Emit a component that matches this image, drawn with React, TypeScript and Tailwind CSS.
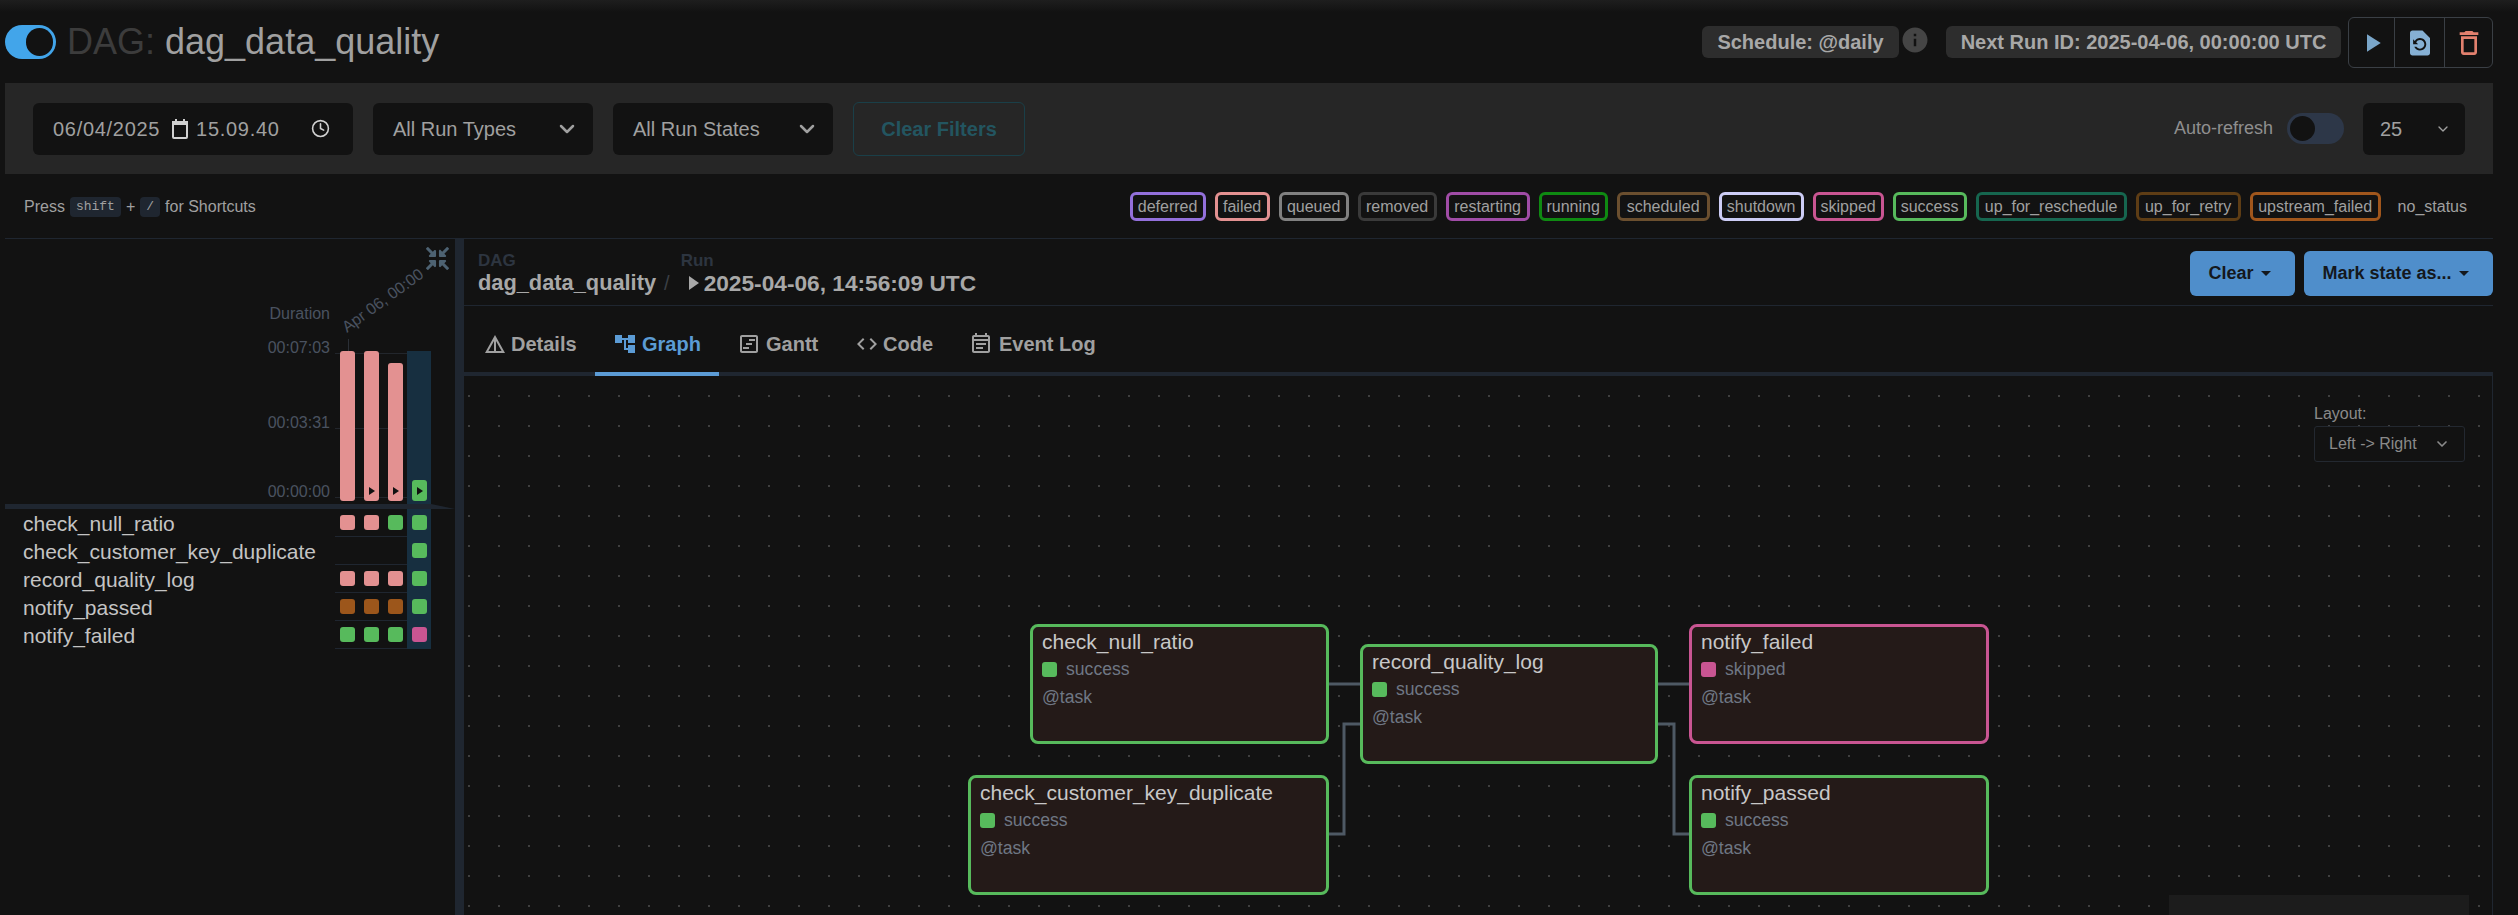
import { ChevronDown, Clock } from 'lucide-react';
import { FaCompressArrowsAlt } from 'react-icons/fa';
import {
  MdAccountTree,
  MdCode,
  MdDetails,
  MdInfo,
  MdOutlineDelete,
  MdOutlineEventNote,
  MdOutlineViewTimeline,
  MdPlayArrow,
  MdRestorePage,
} from 'react-icons/md';

const legend = [
  { name: 'deferred', className: 'w-[76px] border-[#9370db]' },
  { name: 'failed', className: 'w-[55px] border-[#e39191]' },
  { name: 'queued', className: 'w-[70px] border-[#808080]' },
  { name: 'removed', className: 'w-[79px] border-[#3a3a3a]' },
  { name: 'restarting', className: 'w-[84px] border-[#a04ca6]' },
  { name: 'running', className: 'w-[69px] border-[#0f8a12]' },
  { name: 'scheduled', className: 'w-[93px] border-[#6b4f2f]' },
  { name: 'shutdown', className: 'w-[85px] border-[#ccccf5]' },
  { name: 'skipped', className: 'w-[71px] border-[#c95592]' },
  { name: 'success', className: 'w-[74px] border-[#57ba5c]' },
  { name: 'up_for_reschedule', className: 'w-[151px] border-[#16664f]' },
  { name: 'up_for_retry', className: 'w-[105px] border-[#5e3d15]' },
  { name: 'upstream_failed', className: 'w-[131px] border-[#a0561c]' },
];

const RED = 'bg-[#e39191]';
const GREEN = 'bg-[#57ba5c]';
const BROWN = 'bg-[#9c561b]';
const PINK = 'bg-[#c95592]';

const rows = [
  { name: 'check_null_ratio', cells: [RED, RED, GREEN, GREEN] },
  { name: 'check_customer_key_duplicate', cells: ['', '', '', GREEN] },
  { name: 'record_quality_log', cells: [RED, RED, RED, GREEN] },
  { name: 'notify_passed', cells: [BROWN, BROWN, BROWN, GREEN] },
  { name: 'notify_failed', cells: [GREEN, GREEN, GREEN, PINK] },
];

const nodes = [
  { name: 'check_null_ratio', status: 'success', place: 'left-[566px] top-[248px] w-[299px] border-[#57ba5c]', dot: GREEN },
  { name: 'check_customer_key_duplicate', status: 'success', place: 'left-[504px] top-[399px] w-[361px] border-[#57ba5c]', dot: GREEN },
  { name: 'record_quality_log', status: 'success', place: 'left-[896px] top-[268px] w-[298px] border-[#57ba5c]', dot: GREEN },
  { name: 'notify_failed', status: 'skipped', place: 'left-[1225px] top-[248px] w-[300px] border-[#c95592]', dot: PINK },
  { name: 'notify_passed', status: 'success', place: 'left-[1225px] top-[399px] w-[300px] border-[#57ba5c]', dot: GREEN },
];

function Select({ label, className }: { label: string; className: string }) {
  return (
    <div className={`flex h-[52px] items-center justify-between rounded-md bg-[#121212] pl-[20px] pr-[14px] text-[20px] text-[#a0a0a0] ${className}`}>
      <span>{label}</span>
      <ChevronDown size={24} strokeWidth={2.5} />
    </div>
  );
}

function Header() {
  return (
    <div className="flex h-[83px] items-start justify-between pb-[16px]">
      <div className="flex h-full items-center gap-[11px] pt-[16px]">
        <div className="flex h-[34px] w-[51px] items-center justify-end rounded-full bg-[#42a5ea] pr-[3px]">
          <div className="h-[28px] w-[27px] rounded-full bg-[#121212]" />
        </div>
        <h1 className="text-[36px] leading-[44px] text-[#a0a0a0]">
          <span className="text-[#3c3c3c]">DAG: </span>dag_data_quality
        </h1>
      </div>
      <div className="flex items-start pt-[17px]">
        <div className="mt-[9px] flex h-[32px] w-[197px] items-center justify-center rounded-md bg-[#2d2d2d] text-[20px] font-bold text-[#a8a8a8]">
          Schedule: @daily
        </div>
        <MdInfo size={30} className="ml-[1px] mt-[8px] text-[#454545]" />
        <div className="ml-[16px] mt-[9px] flex h-[32px] w-[395px] items-center justify-center rounded-md bg-[#2d2d2d] text-[20px] font-bold text-[#a8a8a8]">
          Next Run ID: 2025-04-06, 00:00:00 UTC
        </div>
        <div className="ml-[7px] flex h-[51px] w-[145px] rounded-md border border-[#3a3f45]">
          <div className="flex w-[46px] items-center justify-center border-r border-[#3a3f45]">
            <MdPlayArrow size={30} className="text-[#7aa6c9]" />
          </div>
          <div className="flex w-[50px] items-center justify-center border-r border-[#3a3f45]">
            <MdRestorePage size={30} className="text-[#86b0d4]" />
          </div>
          <div className="flex flex-1 items-center justify-center">
            <MdOutlineDelete size={32} className="text-[#e2806e]" />
          </div>
        </div>
      </div>
    </div>
  );
}

function Filters() {
  return (
    <div className="flex h-[91px] items-center justify-between bg-[#262626] pl-[28px] pr-[28px]">
      <div className="flex items-center gap-[20px]">
        <div className="flex h-[52px] w-[320px] items-center rounded-md bg-[#121212] pl-[20px] text-[20px] tracking-[0.7px] text-[#a0a0a0]">
          <span>06/04/2025</span>
          <svg width="18" height="22" viewBox="0 0 18 22" className="ml-[11px] mr-[7px]" fill="none" stroke="#d0d0d0" strokeWidth="2">
            <rect x="2" y="4" width="14" height="16" rx="1" />
            <path d="M2 6h14V4H2zM5 1v3M13 1v3" fill="#d0d0d0" />
          </svg>
          <span>15.09.40</span>
          <Clock size={19} className="ml-[31px] text-[#d0d0d0]" />
        </div>
        <Select label="All Run Types" className="w-[220px]" />
        <Select label="All Run States" className="w-[220px]" />
        <button className="h-[54px] w-[172px] rounded-md border border-[#1a3f48] text-[20px] font-bold text-[#235560]">
          Clear Filters
        </button>
      </div>
      <div className="flex items-center">
        <span className="text-[18px] text-[#8f8f8f]">Auto-refresh</span>
        <div className="ml-[14px] flex h-[31px] w-[57px] items-center rounded-full bg-[#2d3748] pl-[3px]">
          <div className="h-[25px] w-[25px] rounded-full bg-[#121212]" />
        </div>
        <div className="ml-[19px] flex h-[52px] w-[102px] items-center justify-between rounded-md bg-[#121212] pl-[17px] pr-[14px] text-[20px] text-[#a0a0a0]">
          <span>25</span>
          <ChevronDown size={16} />
        </div>
      </div>
    </div>
  );
}

function LegendRow() {
  return (
    <div className="flex h-[65px] items-start justify-between border-b border-[#1f2630] pl-[19px] pr-[26px] pt-[18px] text-[16px] text-[#a0a0a0]">
      <div className="flex h-[29px] items-center gap-[5px]">
        <span>Press</span>
        <kbd className="flex h-[20px] items-center rounded-[4px] bg-[#1f2630] px-[6px] font-['Liberation_Mono',monospace] text-[13px]">shift</kbd>
        <span>+</span>
        <kbd className="flex h-[20px] items-center rounded-[4px] bg-[#1f2630] px-[6px] font-['Liberation_Mono',monospace] text-[13px]">/</kbd>
        <span>for Shortcuts</span>
      </div>
      <div className="flex items-center gap-[9px]">
        {legend.map((item) => (
          <span key={item.name} className={`flex h-[29px] items-center justify-center whitespace-nowrap rounded-[6px] border-[3px] ${item.className}`}>
            {item.name}
          </span>
        ))}
        <span className="ml-[8px]">no_status</span>
      </div>
    </div>
  );
}

function RunBar({ height, color, running }: { height: string; color: string; running?: boolean }) {
  return (
    <div className={`flex w-[15px] items-end justify-center rounded-[3px] pb-[6px] ${height} ${color}`}>
      {running && <div className="h-0 w-0 border-y-[4px] border-l-[6px] border-y-transparent border-l-[#111]" />}
    </div>
  );
}

function GridPanel() {
  return (
    <div className="flex w-[450px] shrink-0 flex-col">
      <div className="relative h-[112px]">
        <FaCompressArrowsAlt size={23} className="absolute left-[421px] top-[8px] text-[#4d6272]" />
        <span className="absolute right-[125px] top-[63px] text-[16px] text-[#4a5260]">Duration</span>
        <span className="absolute left-[339px] top-[78px] origin-left -rotate-[36deg] whitespace-nowrap text-[16px] text-[#4a5260]">Apr 06, 00:00</span>
        <div className="absolute bottom-0 left-[343px] h-[12px] w-px bg-[#2a2f36]" />
      </div>
      <div className="relative flex h-[153px] justify-end pr-[24px]">
        <div className="absolute left-[330px] right-[24px] top-[2px] h-px bg-[#22262c]" />
        <div className="absolute left-[330px] right-[24px] top-[77px] h-px bg-[#22262c]" />
        <div className="absolute left-[330px] right-[24px] top-[146px] h-px bg-[#22262c]" />
        <div className="relative -mt-[15px] mr-[5px] flex flex-col text-right text-[16px] leading-[24px] text-[#4a5260]">
          <span>00:07:03</span>
          <span className="mt-[51px]">00:03:31</span>
          <span className="mt-[45px]">00:00:00</span>
        </div>
        <div className="relative flex h-[150px] w-[24px] items-end pl-[5px]">
          <RunBar height="h-[150px]" color={RED} />
        </div>
        <div className="relative flex h-[150px] w-[24px] items-end pl-[5px]">
          <RunBar height="h-[150px]" color={RED} running />
        </div>
        <div className="relative flex h-[150px] w-[24px] items-end pl-[5px]">
          <RunBar height="h-[138px]" color={RED} running />
        </div>
        <div className="relative flex h-[153px] w-[24px] items-end bg-[#172f40] pb-[3px] pl-[5px]">
          <RunBar height="h-[21px]" color={GREEN} running />
        </div>
      </div>
      <div className="flex h-[5px]">
        <div className="h-full w-[426px] bg-[#1f2630]" />
        <div className="h-0 w-0 border-l-[24px] border-t-[5px] border-l-[#1f2630] border-t-transparent" />
      </div>
      <div className="pr-[24px]">
        {rows.map((row) => (
          <div key={row.name} className="flex h-[28px]">
            <span className="flex-1 pl-[18px] text-[21px] leading-[30px] text-[#c4c4c4]">{row.name}</span>
            {row.cells.map((cell, i) => (
              <div
                key={i}
                className={`h-full w-[24px] pl-[5px] pt-[6px] ${i === 3 ? 'bg-[#172f40]' : 'border-b border-[#1f2630]'}`}
              >
                {cell && <div className={`h-[15px] w-[15px] rounded-[3px] ${cell}`} />}
              </div>
            ))}
          </div>
        ))}
      </div>
    </div>
  );
}

function TaskNode({ node }: { node: (typeof nodes)[number] }) {
  return (
    <div className={`absolute h-[120px] rounded-[8px] border-[3px] bg-[#241a18] pl-[9px] pt-[3px] ${node.place}`}>
      <div className="text-[21px] leading-[24px] text-[#c8c8c8]">{node.name}</div>
      <div className="mt-[8px] flex h-[15px] items-center gap-[9px]">
        <div className={`h-[15px] w-[15px] rounded-[3px] ${node.dot}`} />
        <span className="text-[17.6px] leading-[15px] text-[#6f7784]">{node.status}</span>
      </div>
      <div className="mt-[7px] text-[17.6px] leading-[26px] text-[#6f7784]">@task</div>
    </div>
  );
}

function DetailsPanel() {
  return (
    <div className="flex min-w-0 flex-1 flex-col">
      <div className="flex h-[67px] shrink-0 items-start justify-between border-b border-[#1f2630] pl-[14px] pt-[12px]">
        <div className="flex">
          <div>
            <div className="text-[17px] font-bold leading-[20px] text-[#2d3540]">DAG</div>
            <div className="-mt-[1px] text-[21.8px] font-bold leading-[26px] text-[#a8a8a8]">dag_data_quality</div>
          </div>
          <span className="ml-[8px] mt-[19px] text-[20px] leading-[26px] text-[#3a3f45]">/</span>
          <div className="ml-[11px]">
            <div className="text-[17px] font-bold leading-[20px] text-[#2d3540]">Run</div>
            <div className="-mt-[1px] flex items-center text-[22.7px] font-bold leading-[26px] text-[#a8a8a8]">
              <span className="ml-[8px] mr-[5px] h-0 w-0 border-y-[7px] border-l-[10px] border-y-transparent border-l-[#a8a8a8]" />
              2025-04-06, 14:56:09 UTC
            </div>
          </div>
        </div>
        <div className="flex gap-[9px]">
          <button className="flex h-[45px] w-[105px] items-center justify-center gap-[7px] rounded-md bg-[#4f8ecb] pr-[6px] text-[18px] font-bold text-[#14181d]">
            Clear
            <span className="h-0 w-0 border-x-[5px] border-t-[5px] border-x-transparent border-t-[#14181d]" />
          </button>
          <button className="flex h-[45px] w-[189px] items-center justify-center gap-[7px] rounded-md bg-[#4f8ecb] pr-[6px] text-[18px] font-bold text-[#14181d]">
            Mark state as...
            <span className="h-0 w-0 border-x-[5px] border-t-[5px] border-x-transparent border-t-[#14181d]" />
          </button>
        </div>
      </div>
      <div className="flex h-[70px] shrink-0 items-stretch border-b-[4px] border-[#1f2630] pl-[1px] pt-[10px] text-[20px] font-bold text-[#a0a0a0]">
        <div className="flex w-[130px] items-center gap-[4px] pl-[18px]">
          <MdDetails size={24} />
          Details
        </div>
        <div className="-mb-[4px] -mt-[10px] flex w-[124px] items-center gap-[5px] border-b-[4px] border-[#5b9bd5] pl-[18px] pt-[10px] text-[#5b9bd5]">
          <MdAccountTree size={24} />
          Graph
        </div>
        <div className="flex w-[118px] items-center gap-[5px] pl-[18px]">
          <MdOutlineViewTimeline size={24} />
          Gantt
        </div>
        <div className="flex w-[115px] items-center gap-[4px] pl-[18px]">
          <MdCode size={24} />
          Code
        </div>
        <div className="flex items-center gap-[6px] pl-[17px]">
          <MdOutlineEventNote size={24} />
          Event Log
        </div>
      </div>
      <div className="relative min-h-0 flex-1 overflow-hidden border-r border-[#1f2630] bg-[radial-gradient(circle,#3f3f3f_0.8px,transparent_1.2px)] bg-[size:30px_30px] bg-[position:-10px_5px]">
        <svg className="absolute inset-0 h-full w-full" fill="none" stroke="#4e5964" strokeWidth="3">
          <path d="M865 308H896" />
          <path d="M865 458H880V348H896" />
          <path d="M1194 308H1225" />
          <path d="M1194 348H1210V458H1225" />
        </svg>
        {nodes.map((node) => (
          <TaskNode key={node.name} node={node} />
        ))}
        <div className="absolute left-[1850px] top-[26px] w-[151px]">
          <div className="text-[16px] leading-[24px] text-[#8a8a8a]">Layout:</div>
          <div className="flex h-[36px] items-center justify-between rounded-[3px] border border-[#232830] bg-[#121212] pl-[14px] pr-[14px] text-[16px] text-[#8a8a8a]">
            <span>Left -&gt; Right</span>
            <ChevronDown size={16} strokeWidth={2.5} />
          </div>
        </div>
        <div className="absolute left-[1705px] top-[519px] h-[40px] w-[300px] bg-[#1c1c1c]" />
      </div>
    </div>
  );
}

export default function App() {
  return (
    <div className="relative flex h-[915px] w-full flex-col overflow-hidden bg-[#121212] pl-[5px] pr-[25px] font-['Liberation_Sans',Arial,sans-serif]">
      <div className="absolute inset-x-0 top-0 h-[12px] bg-gradient-to-b from-[#1e1e1e] to-[#121212]" />
      <div className="relative">
        <Header />
        <Filters />
        <LegendRow />
      </div>
      <div className="flex min-h-0 flex-1">
        <GridPanel />
        <div className="w-[9px] shrink-0 bg-[#1f2630]" />
        <DetailsPanel />
      </div>
    </div>
  );
}
